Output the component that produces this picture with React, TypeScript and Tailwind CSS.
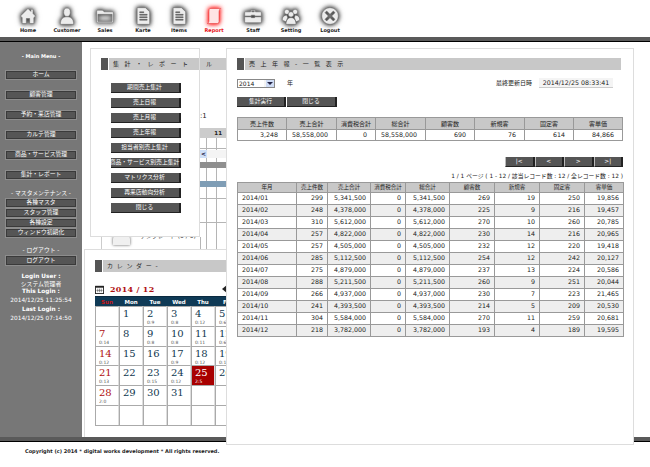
import type { ReactNode } from "react";

const FONT = "font-['DejaVu_Sans','Noto_Sans_CJK_JP',sans-serif]";

const navItems: { label: string; width: string; icon: ReactNode; active?: boolean }[] = [
  {
    label: "Home",
    width: "w-[38px] ml-[9px]",
    icon: <path d="M3 12 L12 3 L15.5 6.5 V4 H18 V9 L21 12 L19 14 V21 H14 V15 H10 V21 H5 V14 Z" />,
  },
  {
    label: "Customer",
    width: "w-[40px]",
    icon: (
      <>
        <ellipse cx="12" cy="7.5" rx="4" ry="5" />
        <path d="M4 22 C4 15 8 13 12 13 C16 13 20 15 20 22 Z" />
      </>
    ),
  },
  {
    label: "Sales",
    width: "w-[36px]",
    icon: <path d="M2 6 Q2 5 3 5 H9 L11 7 H21 Q22 7 22 8 V19 Q22 20 21 20 H3 Q2 20 2 19 Z M3.5 10 V18.5 H20.5 V10 Z" fillRule="evenodd" />,
  },
  {
    label: "Karte",
    width: "w-[40px]",
    icon: <path d="M5 2 H15 L20 7 V22 H5 Z M8 7 H13 V8 H8 Z M8 10 H17 V11 H8 Z M8 13 H17 V14 H8 Z M8 16 H17 V17 H8 Z" fillRule="evenodd" />,
  },
  {
    label: "Items",
    width: "w-[32px]",
    icon: <path d="M5 2 H15 L20 7 V22 H5 Z M8 7 H13 V8 H8 Z M8 10 H17 V11 H8 Z M8 13 H17 V14 H8 Z M8 16 H17 V17 H8 Z" fillRule="evenodd" />,
  },
  {
    label: "Report",
    width: "w-[38px]",
    active: true,
    icon: <path d="M7 3 H20 Q18 4 18 7 V19 Q18 21 16 21 H4 Q6 20 6 18 V6 Q6 3 7 3 Z" />,
  },
  {
    label: "Staff",
    width: "w-[40px]",
    icon: <path d="M9 7 V5 H15 V7 H21 Q22 7 22 8 V12 H14 V11 H10 V12 H2 V8 Q2 7 3 7 Z M10.5 6 V7 H13.5 V6 Z M2 13 H10 V14 H14 V13 H22 V19 Q22 20 21 20 H3 Q2 20 2 19 Z" fillRule="evenodd" />,
  },
  {
    label: "Setting",
    width: "w-[36px]",
    icon: (
      <>
        <circle cx="7" cy="7" r="3" />
        <circle cx="17" cy="7" r="3" />
        <circle cx="12" cy="10" r="3.2" />
        <path d="M1.5 17 C1.5 12 5 11 7 11 L8 14 L6 19 Z M22.5 17 C22.5 12 19 11 17 11 L16 14 L18 19 Z M6 22 C6 16 9 14 12 14 C15 14 18 16 18 22 Z" />
      </>
    ),
  },
  {
    label: "Logout",
    width: "w-[42px]",
    icon: (
      <path
        d="M12 2 A10 10 0 1 1 12 22 A10 10 0 1 1 12 2 Z M8 6 L6 8 L10 12 L6 16 L8 18 L12 14 L16 18 L18 16 L14 12 L18 8 L16 6 L12 10 Z"
        fillRule="evenodd"
      />
    ),
  },
];

const summaryHead = ["売上件数", "売上合計", "消費税合計", "総合計", "顧客数", "新規客", "固定客", "客単価"];
const summaryRow = ["3,248", "58,558,000", "0", "58,558,000", "690", "76", "614", "84,866"];
const summaryWidths = ["w-[49px]", "w-[50px]", "w-[39px]", "w-[50px]", "w-[49px]", "w-[50px]", "w-[49px]", "w-[49px]"];

const listHead = ["年月", "売上件数", "売上合計", "消費税合計", "総合計", "顧客数", "新規客", "固定客", "客単価"];
const listWidths = ["w-[59px]", "w-[31px]", "w-[43px]", "w-[35px]", "w-[44px]", "w-[45px]", "w-[45px]", "w-[45px]", "w-[39px]"];
const listRows = [
  ["2014/01", "299", "5,341,500", "0", "5,341,500", "269", "19", "250", "19,856"],
  ["2014/02", "248", "4,378,000", "0", "4,378,000", "225", "9", "216", "19,457"],
  ["2014/03", "310", "5,612,000", "0", "5,612,000", "270", "10", "260", "20,785"],
  ["2014/04", "257", "4,822,000", "0", "4,822,000", "230", "14", "216", "20,965"],
  ["2014/05", "257", "4,505,000", "0", "4,505,000", "232", "12", "220", "19,418"],
  ["2014/06", "285", "5,112,500", "0", "5,112,500", "254", "12", "242", "20,127"],
  ["2014/07", "275", "4,879,000", "0", "4,879,000", "237", "13", "224", "20,586"],
  ["2014/08", "288", "5,211,500", "0", "5,211,500", "260", "9", "251", "20,044"],
  ["2014/09", "266", "4,937,000", "0", "4,937,000", "230", "7", "223", "21,465"],
  ["2014/10", "241", "4,393,500", "0", "4,393,500", "214", "5", "209", "20,530"],
  ["2014/11", "304", "5,584,000", "0", "5,584,000", "270", "11", "259", "20,681"],
  ["2014/12", "218", "3,782,000", "0", "3,782,000", "193", "4", "189", "19,595"],
];

const reportMenu = [
  "期間売上集計",
  "売上日報",
  "売上月報",
  "売上年報",
  "担当者別売上集計",
  "商品・サービス別売上集計",
  "マトリクス分析",
  "再来店動向分析",
  "閉じる",
];

// only Sun..Fri show, the main window covers the rest
const calWeeks: [string, string][][] = [
  [["", ""], ["1", ""], ["2", "0:9"], ["3", "0:8"], ["4", "0:12"], ["5", "0:6"]],
  [["7", "0:14"], ["8", ""], ["9", "0:8"], ["10", "0:8"], ["11", "0:11"], ["12", "0:6"]],
  [["14", "0:12"], ["15", ""], ["16", ""], ["17", "0:9"], ["18", "0:12"], ["19", "0:1"]],
  [["21", "0:13"], ["22", ""], ["23", "0:15"], ["24", "0:12"], ["25", "2:5"], ["26", ""]],
  [["28", "2:0"], ["29", ""], ["30", ""], ["31", ""], ["", ""], ["", ""]],
  [["", ""], ["", ""], ["", ""], ["", ""], ["", ""], ["", ""]],
];

function NavItem({ item }: { item: (typeof navItems)[number] }) {
  return (
    <div className={`${item.width} flex flex-col items-center shrink-0`}>
      <svg
        viewBox="0 0 24 24"
        fill={item.active ? "#ffe4e4" : "#ececec"}
        stroke={item.active ? "#e03030" : "#666666"}
        strokeWidth="0.6"
        className={
          item.active
            ? "w-[20px] h-[20px] mt-[6px] [filter:drop-shadow(0_0_2px_#ff1010)_drop-shadow(0_0_2px_#ff5050)]"
            : "w-[20px] h-[20px] mt-[6px] [filter:drop-shadow(0_0_2px_#444444)_drop-shadow(0_0_2px_#666666)]"
        }
      >
        {item.icon}
      </svg>
      <span
        className={`mt-[1px] text-[5px] leading-[7px] font-bold whitespace-nowrap ${
          item.active ? "text-[#e8141c]" : "text-[#222]"
        }`}
      >
        {item.label}
      </span>
    </div>
  );
}

function SideButton({ children, className = "" }: { children: ReactNode; className?: string }) {
  return (
    <div
      className={`mx-[5px] h-[10px] flex items-center justify-center bg-[#555] border border-[#8c8c8c] shadow-[inset_0_0_0_1px_#3a3a3a] text-white text-[5.8px] leading-none whitespace-nowrap ${className}`}
    >
      {children}
    </div>
  );
}

function WindowTitle({ children, className = "" }: { children: ReactNode; className?: string }) {
  return (
    <div className={`flex h-[12px] ${className}`}>
      <div className="w-[7px] bg-[#555] shrink-0" />
      <div className="ml-px flex-1 bg-[#c8c8c8] flex items-center pl-[4px] text-[6px] leading-none text-[#222] tracking-[1.8px] whitespace-nowrap overflow-hidden">
        {children}
      </div>
    </div>
  );
}

function DarkButton({ children, className = "" }: { children: ReactNode; className?: string }) {
  return (
    <div
      className={`h-[10px] flex items-center justify-center bg-[#555] border-r-2 border-b border-[#222] text-white text-[5.8px] leading-none whitespace-nowrap ${className}`}
    >
      {children}
    </div>
  );
}

// window behind the report menu, only its right end shows
function BackWindow() {
  return (
    <div className="absolute left-[8px] top-[5px] w-[136px] h-[203px] bg-white border-b border-[#ccc]">
      <div className="absolute left-[10px] top-[11px] right-0 h-[12px] bg-[#c8c8c8]">
        <span className="absolute left-[106px] top-[3px] text-[6px] leading-none text-[#222]">ル</span>
      </div>
      <span className="absolute left-[110px] top-[66px] text-[7px] leading-none text-[#222]">:1</span>
      <div className="absolute left-[110px] top-[81px] right-0 h-[10px] bg-[#ccc] text-[5.5px] leading-[10px] text-right pr-[4px] font-bold text-[#222]">
        11
      </div>
      <div className="absolute left-[116px] top-[91px] bottom-0 w-px bg-[#b5b5b5]" />
      <div className="absolute left-[126px] top-[91px] bottom-0 w-px bg-[#b5b5b5]" />
      <div className="absolute left-[110px] top-[101px] right-0 h-px bg-[#b5b5b5]" />
      <div className="absolute left-[110px] top-[103px] right-0 h-[8px] bg-[#f4f4f4]">
        <div className="w-[7px] h-[8px] bg-[#cfe0f8] text-[6px] leading-[8px] text-center font-bold text-[#224]">&lt;</div>
      </div>
      <div className="absolute left-[110px] top-[115px] right-0 h-[6px] bg-[#8f8f8f]" />
      <div className="absolute left-[110px] top-[134px] right-0 h-[6px] bg-[#7f9db5]" />
      <div className="absolute left-[110px] top-[151px] right-0 h-px bg-[#b5b5b5]" />
      <div className="absolute left-[110px] top-[175px] right-0 h-px bg-[#b5b5b5]" />
      <div className="absolute left-[11px] top-[190px] bottom-0 w-px bg-[#ccc]" />
      <div className="absolute left-[110px] top-[190px] bottom-0 w-px bg-[#b5b5b5]" />
      <div className="absolute left-[23px] top-[186px] w-[17px] h-[12px] rounded-t-[6px] bg-[#f0f0f0] shadow-[0_0_3px_#555]" />
      <span className="absolute left-[50px] top-[186px] text-[6px] leading-none text-[#333] whitespace-nowrap">テンプレート (0 / 0)</span>
    </div>
  );
}

function ReportMenu() {
  return (
    <div className="absolute left-[8px] top-[6px] w-[110px] h-[189px] bg-white border border-[#ddd] pt-[9px] pl-[10px]">
      <WindowTitle>集 計 ・ レ ポ ー ト</WindowTitle>
      <div className="mt-[13px] flex flex-col gap-[5px] w-[70px] ml-[9.5px]">
        {reportMenu.map((m) => (
          <DarkButton key={m}>{m}</DarkButton>
        ))}
      </div>
    </div>
  );
}

function CalendarWindow() {
  return (
    <div className="absolute left-[2px] top-[207px] w-[142px] h-[188px] overflow-hidden bg-white border-l border-t border-[#ddd] pt-[10px] pl-[10px]">
      <WindowTitle>
        <span className="tracking-[0.9px]">カ レ ン ダ ー -</span>
      </WindowTitle>
      <div className="flex items-center h-[12px] mt-[11px] relative">
        <svg viewBox="0 0 10 10" className="w-[9px] h-[9px]">
          <rect x="0.5" y="1.5" width="9" height="8" fill="#fff" stroke="#222" />
          <rect x="0.5" y="1" width="9" height="2" fill="#222" />
          <path d="M3 4 V8 M5 4 V8 M7 4 V8 M1.5 6 H8.5" stroke="#444" strokeWidth="0.6" />
        </svg>
        <span className="ml-[6px] text-[8px] leading-none font-bold text-[#b01010] font-['DejaVu_Serif',serif] tracking-[0.3px]">2014 / 12</span>
        <span className="absolute left-[127px] top-[2px] w-0 h-0 border-y-[4px] border-y-transparent border-r-[5px] border-r-[#222]" />
      </div>
      <div className="grid grid-cols-[repeat(6,24px)] mt-[1px] h-[10px] bg-[#0f3a56] text-[5.5px] leading-[10px] font-bold text-white text-center border-t border-[#0a2a40]">
        {["Sun", "Mon", "Tue", "Wed", "Thu", "Fri"].map((d, i) => (
          <div key={d} className={i === 0 ? "text-[#c81414]" : ""}>
            {d}
          </div>
        ))}
      </div>
      <div className="grid grid-cols-[repeat(6,24px)] auto-rows-[19.8px] border-b border-[#aaa]">
        {calWeeks.flatMap((week, w) =>
          week.map(([day, note], d) => {
            const today = day === "25";
            return (
              <div
                key={`${w}-${d}`}
                className={`border-l border-t border-[#aaa] border-r border-r-[#ddd] pl-[3px] ${today ? "bg-[#a80000] text-white" : "bg-white"}`}
              >
                <div
                  className={`text-[10px] leading-[11px] pt-[1px] font-['DejaVu_Serif',serif] ${
                    today ? "text-white" : d === 0 ? "text-[#b01010]" : "text-[#12384f]"
                  }`}
                >
                  {day}
                </div>
                <div className={`text-[4.5px] leading-[6px] mt-[1px] ${today ? "text-white" : "text-[#555]"}`}>{note}</div>
              </div>
            );
          }),
        )}
      </div>
    </div>
  );
}

function MainWindow() {
  return (
    <div className="absolute left-[144px] top-[6px] w-[408px] h-[397px] bg-white border border-[#ddd] pt-[9px] pl-[10px] text-[#222]">
      <WindowTitle className="w-[384px]">売 上 年 報 - 一 覧 表 示</WindowTitle>

      <div className="flex items-center h-[10px] mt-[8px] w-[386px]">
        <div className="w-[38px] h-[9px] flex border border-[#888] bg-[#f4f4f4]">
          <span className="w-[26px] bg-white text-[6px] leading-[7px] pl-[1px]">2014</span>
          <span className="flex-1" />
          <span className="w-[8px] bg-[#cfdcf5] flex items-center justify-center">
            <span className="w-0 h-0 border-x-[3px] border-x-transparent border-t-[3px] border-t-[#224]" />
          </span>
        </div>
        <span className="ml-[12px] text-[6px] leading-none">年</span>
        <span className="ml-auto text-[6px] leading-none">最終更新日時</span>
        <span className="ml-[7px] w-[74px] h-[10px] bg-[#f4f4f4] border-b border-[#ccc] text-[6.3px] leading-[10px] text-center whitespace-nowrap mr-[10px]">
          2014/12/25 08:33:41
        </span>
      </div>

      <div className="flex mt-[9px]">
        <DarkButton className="w-[49px]">集計実行</DarkButton>
        <DarkButton className="w-[50px] ml-px">閉じる</DarkButton>
      </div>

      <table className="mt-[10px] table-fixed border-collapse w-[386px] border border-[#999]">
        <tbody>
          <tr className="h-[12px] bg-[#c8c8c8]">
            {summaryHead.map((h, i) => (
              <td key={h} className={`${summaryWidths[i]} border border-[#999] p-0 text-center text-[6px] leading-none whitespace-nowrap`}>
                {h}
              </td>
            ))}
          </tr>
          <tr className="h-[11px]">
            {summaryRow.map((v, i) => (
              <td key={i} className="border border-[#999] p-0 pr-[8px] text-right text-[6.3px] leading-none whitespace-nowrap">
                {v}
              </td>
            ))}
          </tr>
        </tbody>
      </table>

      <div className="flex mt-[16px] w-[386px] justify-end">
        {["|<", "<", ">", ">|"].map((p) => (
          <DarkButton key={p} className="w-[29.5px] border-l border-l-[#bbb]">
            {p}
          </DarkButton>
        ))}
      </div>

      <div className="w-[386px] mt-[5px] h-[9px] text-right text-[5.8px] leading-[9px] whitespace-nowrap">
        1 / 1 ページ ( 1 - 12 / 該当レコード数 : 12 / 全レコード数 : 12 )
      </div>

      <table className="mt-[1px] table-fixed border-collapse w-[386px] border border-[#999]">
        <tbody>
          <tr className="h-[10px] bg-[#c8c8c8]">
            {listHead.map((h, i) => (
              <td key={h} className={`${listWidths[i]} border border-[#999] p-0 text-center text-[5.5px] leading-none whitespace-nowrap`}>
                {h}
              </td>
            ))}
          </tr>
          {listRows.map((row, r) => (
            <tr key={row[0]} className={`h-[12px] ${r % 2 === 1 ? "bg-[#eeeeee]" : "bg-white"}`}>
              {row.map((v, i) => (
                <td
                  key={i}
                  className={`border border-[#999] p-0 text-[6.3px] leading-none whitespace-nowrap ${
                    i === 0 ? "pl-[4px] text-left" : "pr-[4px] text-right"
                  }`}
                >
                  {v}
                </td>
              ))}
            </tr>
          ))}
        </tbody>
      </table>
    </div>
  );
}

export default function App() {
  return (
    <div className={`relative w-[650px] h-[467px] overflow-hidden bg-white flex flex-col ${FONT}`}>
      <header className="h-[37px] flex shrink-0">
        {navItems.map((item) => (
          <NavItem key={item.label} item={item} />
        ))}
      </header>
      <div className="h-[5px] shrink-0 bg-[#5a5a5a] border-b border-black" />

      <div className="h-[395px] flex shrink-0">
        <aside className="w-[82px] shrink-0 bg-[#777] text-white pt-[11px] text-center">
          <div className="text-[5px] leading-[7px] font-bold mb-[10px]">- Main Menu -</div>
          <div className="flex flex-col gap-[10px]">
            {["ホーム", "顧客管理", "予約・来店管理", "カルテ管理", "商品・サービス管理", "集計・レポート"].map((m) => (
              <SideButton key={m}>{m}</SideButton>
            ))}
          </div>
          <div className="mt-[9px] text-[5.8px] leading-[9px] whitespace-nowrap">- マスタメンテナンス -</div>
          <div className="flex flex-col">
            {["各種マスタ", "スタッフ管理", "各種設定", "ウィンドウ初期化"].map((m) => (
              <SideButton key={m}>{m}</SideButton>
            ))}
          </div>
          <div className="mt-[8px] text-[5.8px] leading-[9px]">- ログアウト -</div>
          <SideButton className="!h-[11px]">ログアウト</SideButton>
          <div className="mt-[7px] text-[5.8px] leading-[7.7px] flex flex-col">
            <span className="font-bold">Login User :</span>
            <span>システム管理者</span>
            <span className="font-bold">This Login :</span>
            <span className="mt-[1px]">2014/12/25 11:25:54</span>
            <span className="font-bold mt-[1px]">Last Login :</span>
            <span className="mt-[1px]">2014/12/25 07:14:50</span>
          </div>
        </aside>
        {/* free canvas of overlapping windows */}
        <main className="relative flex-1 bg-white z-10 h-[395px]">
          <BackWindow />
          <ReportMenu />
          <CalendarWindow />
          <MainWindow />
        </main>
      </div>

      <div className="h-[5px] shrink-0 bg-[#5a5a5a] border-b border-black" />
      <footer className="pl-[25px] pt-[5px] text-[5px] leading-[8px] font-bold text-[#222] whitespace-nowrap">
        Copyright (c) 2014 * digital works development * All rights reserved.
      </footer>
    </div>
  );
}
